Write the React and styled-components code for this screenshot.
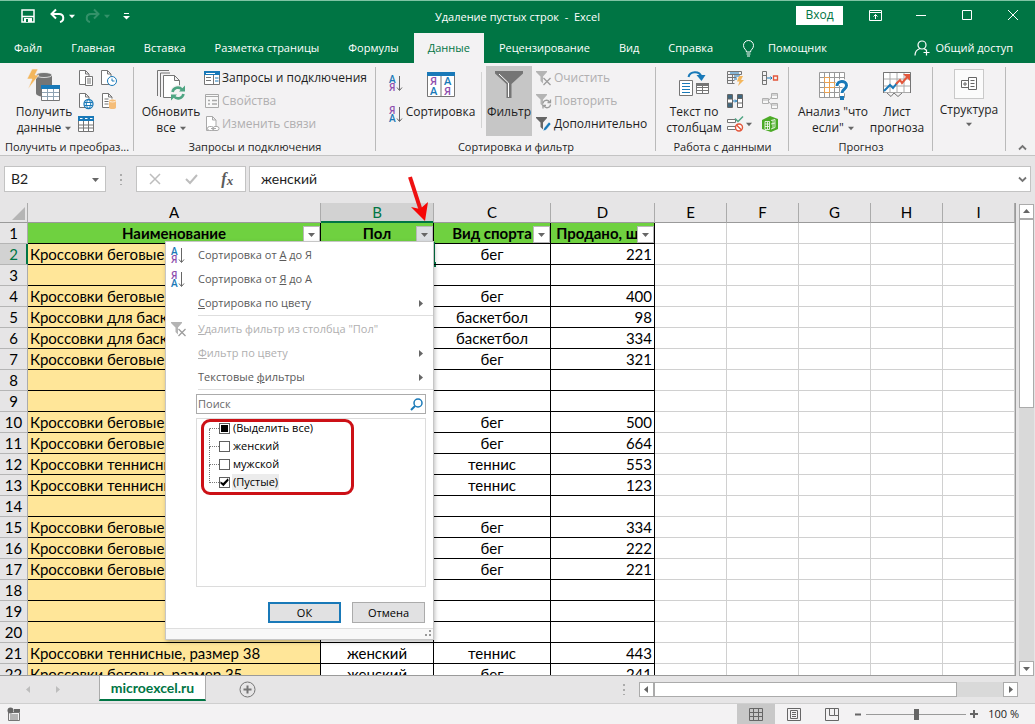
import React from "react";
import styled, {createGlobalStyle, css, ThemeProvider} from "styled-components";

const theme = {
    colors: {
        green: '#007544',
        cellGreen: '#6fd140',
        sand: '#ffe699',
        panel: '#f3f2f3',
        frame: '#e6e5e6',
        line: '#c3c3c3',
        grid: '#d0d0d0',
        text: '#1e1e1e',
        muted: '#b0afb0',
        blue: '#1979b8',
        purple: '#8e4fae',
        icon: '#757575',
    },
    fonts: {
        ui: '"Open Sans", "Noto Sans", sans-serif',
        cell: 'Lato, "Noto Sans", sans-serif',
    },
};

const GlobalStyle = createGlobalStyle`
  *, *::before, *::after {
    box-sizing: border-box;
  }

  body {
    margin: 0;
    overflow: hidden;
  }

  button, input {
    font: inherit;
    color: inherit;
    margin: 0;
  }

  button {
    padding: 0;
    border: 0;
    background: none;
  }

  svg {
    display: block;
    flex: none;
    overflow: visible;
  }
`;

const Window = styled.div`
  display: flex;
  flex-direction: column;
  height: 100vh;
  border-top: 1px solid #7fc4a4;
  background-color: ${({theme}) => theme.colors.frame};
  color: ${({theme}) => theme.colors.text};
  font-family: ${({theme}) => theme.fonts.ui};
  font-size: 12px;
  line-height: 16px;
`;

/* title bar */

const TitleBar = styled.header`
  display: grid;
  grid-template-columns: 1fr auto 1fr;
  align-items: center;
  height: 32px;
  padding-bottom: 4px;
  background-color: ${({theme}) => theme.colors.green};
  color: #fff;
`;

const Title = styled.h1`
  margin: 0;
  padding-top: 3px;
  font-size: 11px;
  font-weight: 400;
  white-space: pre;
`;

const QuickAccess = styled.div`
  display: flex;
  align-items: center;
  gap: 4px;
  padding: 2px 0 0 21px;
`;

const QuickButton = styled.button`
  display: flex;
  align-items: center;
  gap: 4px;
  margin-right: ${({$after}) => $after || 0}px;
  opacity: ${({disabled}) => disabled ? 0.2 : 1};
  color: #fff;
`;

const WindowControls = styled.div`
  display: flex;
  align-items: center;
  justify-content: flex-end;
  gap: 2px;
`;

const SignIn = styled.button`
  width: 47px;
  height: 19px;
  margin-right: 8px;
  background-color: #fff;
  color: ${({theme}) => theme.colors.green};
`;

const ControlButton = styled.button`
  display: grid;
  place-items: center;
  width: 44px;
  height: 28px;
  color: #fff;
`;

/* tabs */

const TabBar = styled.nav`
  display: flex;
  gap: 1px;
  height: 30px;
  background-color: ${({theme}) => theme.colors.green};
  font-size: 11px;
`;

const Tab = styled.button`
  display: flex;
  align-items: center;
  gap: 13px;
  padding: 0 14px;
  color: #fff;

  ${({$active, theme}) => $active && css`
    background-color: ${theme.colors.panel};
    color: ${theme.colors.green};
  `}
`;

const Share = styled(Tab)`
  gap: 5px;
  margin-left: auto;
  padding-right: 22px;
`;

/* ribbon */

const Ribbon = styled.section`
  display: flex;
  height: 93px;
  padding-top: 3px;
  border-bottom: 1px solid ${({theme}) => theme.colors.line};
  background-color: ${({theme}) => theme.colors.panel};
`;

const Group = styled.div`
  position: relative;
  display: flex;
  flex-direction: column;
  flex: none;
  width: ${({$width}) => $width}px;

  &::after {
    content: "";
    position: absolute;
    top: 1px;
    right: 0;
    width: 1px;
    height: 84px;
    background-color: #bababa;
  }
`;

const GroupBody = styled.div`
  display: flex;
  height: 73px;
  padding-left: ${({$left}) => $left}px;
`;

const GroupLabel = styled.div`
  text-align: center;
  font-size: 11px;
  white-space: nowrap;
`;

const BigButton = styled.button`
  display: flex;
  flex-direction: column;
  align-items: center;
  flex: none;
  width: ${({$width}) => $width}px;
  height: 70px;
  white-space: nowrap;
  background-color: ${({$pressed}) => $pressed ? '#c6c6c6' : 'transparent'};

  > svg, > i {
    margin: 3px 0;
  }
`;

const Caption = styled.span`
  display: flex;
  align-items: center;
  gap: 4px;
`;

const Stack = styled.div`
  display: flex;
  flex-direction: column;
  margin-left: ${({$left}) => $left || 0}px;
`;

const SmallButton = styled.button`
  display: flex;
  align-items: center;
  gap: 2px;
  height: 23px;
  white-space: nowrap;
  color: ${({disabled, theme}) => disabled ? theme.colors.muted : 'inherit'};
`;

const IconGrid = styled.div`
  display: grid;
  grid-template-columns: ${({$first}) => $first}px 18px;
  grid-auto-rows: 23px;
  margin-left: ${({$left}) => $left || 0}px;
`;

const SortStack = styled(Stack)`
  gap: 8px;
  padding-top: 6px;
`;

const ThinLine = styled.div`
  width: 1px;
  height: 56px;
  margin: 6px 4px 0;
  background-color: #d3d3d3;
`;

const OutlineBox = styled.i`
  display: grid;
  place-items: center;
  width: 30px;
  height: 30px;
  border: 1px solid #c9c9c9;
  background-color: #fbfbfb;
`;

const Collapse = styled.button`
  align-self: flex-end;
  margin: 0 8px 4px auto;
`;

/* formula bar */

const FormulaBar = styled.div`
  display: flex;
  align-items: center;
  height: 47px;
  padding: 0 4px 1px;
  font-family: ${({theme}) => theme.fonts.cell};
  font-size: 14px;
`;

const NameBox = styled.label`
  display: flex;
  align-items: center;
  width: 102px;
  height: 26px;
  padding: 0 6px;
  border: 1px solid ${({theme}) => theme.colors.line};
  background-color: #fff;
`;

const BarInput = styled.input`
  flex: 1;
  min-width: 0;
  border: 0;
  padding: 0;
  outline: 0;
  background: none;
  font-size: ${({$size}) => $size}px;
`;

const FormulaTools = styled.div`
  display: flex;
  align-items: center;
  justify-content: space-around;
  width: 110px;
  height: 26px;
  margin: 0 3px 0 13px;
  border: 1px solid ${({theme}) => theme.colors.line};
  background-color: #fff;
`;

const FormulaField = styled(NameBox)`
  flex: 1;
  padding: 0 3px 0 11px;
`;

const FxButton = styled.button`
  font: italic 700 16px "Liberation Serif", serif;
  color: #5b5b5b;

  sub {
    font-size: 13px;
    vertical-align: -1px;
  }
`;

/* sheet */

const Workspace = styled.main`
  position: relative;
  display: flex;
  flex: 1;
  min-height: 0;
`;

const SheetView = styled.div`
  flex: 1;
  overflow: hidden;
  border-right: 1px solid #9a9a9a;
  border-bottom: 1px solid #9a9a9a;
  background-color: #fff;
`;

const Sheet = styled.table`
  width: 100%;
  table-layout: fixed;
  border-collapse: separate;
  border-spacing: 0;
  font-family: ${({theme}) => theme.fonts.cell};
  font-size: 15px;
  line-height: 20px;
  color: #000;
`;

const Head = styled.th`
  height: ${({scope}) => scope === 'col' ? 20 : 21}px;
  padding: 0;
  border-right: 1px solid #ababab;
  border-bottom: 1px solid ${({scope}) => scope === 'col' ? '#9a9a9a' : '#b5b5b5'};
  background-color: ${({theme}) => theme.colors.frame};
  font-weight: 400;
  line-height: ${({scope}) => scope === 'col' ? 19 : 20}px;

  ${({$active, scope, theme}) => $active && css`
    background-color: #d2d2d2;
    color: ${theme.colors.green};
    box-shadow: inset ${scope === 'col' ? '0 -1px' : '-1px 0'} ${theme.colors.green};
    border-${scope === 'col' ? 'bottom' : 'right'}-color: ${theme.colors.green};
  `}
`;

const Corner = styled(Head)`
  svg {
    margin: 1px 2px 0 auto;
  }
`;

const Cell = styled.td`
  position: relative;
  height: 21px;
  padding: 0 2px;
  border-right: 1px solid ${({theme}) => theme.colors.grid};
  border-bottom: 1px solid ${({theme}) => theme.colors.grid};
  text-align: ${({$align}) => $align || 'left'};
  white-space: nowrap;

  ${({$framed}) => $framed && css`
    border-color: #000;
  `}

  ${({$fill}) => $fill && css`
    background-color: ${$fill};
  `}
`;

const TitleCell = styled(Cell)`
  padding: 0;
  font-weight: 700;
  text-align: center;
`;

const FilterButton = styled.button`
  position: absolute;
  right: 0;
  bottom: 0;
  display: grid;
  place-items: center;
  width: 17px;
  height: 17px;
  border: 1px solid #b9b9b9;
  background-color: ${({$open}) => $open ? '#dcdfe3' : '#fff'};
`;

const Selection = styled.div`
  position: absolute;
  inset: -2px;
  border: 2px solid ${({theme}) => theme.colors.green};

  &::after {
    content: "";
    position: absolute;
    right: -3px;
    bottom: -3px;
    width: 5px;
    height: 5px;
    background-color: ${({theme}) => theme.colors.green};
  }
`;

const Scroller = styled.div`
  display: flex;
  flex-direction: ${({$vertical}) => $vertical ? 'column' : 'row'};
  background-color: #d9d9d9;
`;

const VScroller = styled(Scroller)`
  width: 15px;
  margin: 1px 1px 0 3px;
`;

const HScroller = styled(Scroller)`
  width: 379px;
  height: 15px;
  margin: 0 17px 0 13px;
`;

const ScrollButton = styled.button`
  display: grid;
  place-items: center;
  width: 15px;
  height: 15px;
  border: 1px solid #ababab;
  background-color: #fff;
`;

const Thumb = styled.div`
  flex: none;
  width: ${({$vertical}) => $vertical ? '100%' : '80%'};
  height: ${({$vertical}) => $vertical ? '40%' : '100%'};
  margin-bottom: auto;
  margin-right: auto;
  border: 1px solid #ababab;
  background-color: #fff;
`;

/* filter menu */

const Menu = styled.div`
  position: absolute;
  z-index: 2;
  top: 18px;
  right: -1px;
  width: 269px;
  padding-top: 1px;
  border: 1px solid #c6c6c6;
  background-color: #fff;
  box-shadow: 1px 2px 4px rgba(0, 0, 0, 0.25);
  color: #5a5a5a;
  font-family: ${({theme}) => theme.fonts.ui};
  font-size: 11px;
  font-weight: 400;
  line-height: 16px;
  text-align: left;
`;

const MenuItem = styled.button`
  display: grid;
  grid-template-columns: 32px 1fr 6px;
  align-items: center;
  width: 100%;
  height: 24px;
  padding: 0 10px 0 0;
  text-align: left;
  color: ${({disabled, theme}) => disabled ? theme.colors.muted : 'inherit'};

  > span {
    grid-column: 2;
  }

  > svg:first-child {
    margin-left: 5px;
  }
`;

const Divider = styled.hr`
  height: 1px;
  margin: 0 0 1px 32px;
  border: 0;
  background-color: #dedede;
`;

const SearchBox = styled.label`
  display: flex;
  align-items: center;
  height: 20px;
  margin: 4px 7px 0 30px;
  padding: 0 2px 0 1px;
  border: 1px solid #ababab;

  input::placeholder {
    color: #6a6a6a;
    opacity: 1;
  }
`;

const ValueList = styled.ul`
  position: relative;
  height: 169px;
  margin: 4px 7px 0 30px;
  padding: 0 0 0 12px;
  border: 1px solid #dcdcdc;
  list-style: none;
  color: #000;
`;

const Value = styled.li`
  display: flex;
  align-items: center;
  height: 18px;

  &::before {
    content: "";
    align-self: flex-start;
    width: 10px;
    height: 18px;
    margin-top: -8px;
    border-left: 1px dotted #777;
    border-bottom: 1px dotted #777;
  }

  &:first-child::before {
    border-left-color: transparent;
  }

  label {
    display: flex;
    align-items: center;
    gap: 2px;
  }

  span {
    padding: 0 1px;
    background-color: ${({$focused}) => $focused ? '#ececec' : 'transparent'};
  }
`;

const Check = styled.input`
  appearance: none;
  display: grid;
  place-items: center;
  width: 11px;
  height: 11px;
  border: 1px solid #5f5f5f;
  background-color: #fff;

  &::after {
    content: "";
    width: ${({$mixed}) => $mixed ? 7 : 9}px;
    height: ${({$mixed}) => $mixed ? 7 : 9}px;
    background-color: #000;
    display: ${({$mixed}) => $mixed ? 'block' : 'none'};
  }

  &:checked::after {
    display: block;
    clip-path: polygon(5% 45%, 35% 62%, 88% 8%, 96% 32%, 38% 96%, 5% 68%);
  }
`;

const RedFrame = styled.div`
  position: absolute;
  top: 0;
  left: 4px;
  width: 153px;
  height: 76px;
  border: 3px solid #cc1016;
  border-radius: 9px;
  pointer-events: none;
`;

const MenuActions = styled.div`
  display: flex;
  justify-content: flex-end;
  gap: 11px;
  padding: 15px 8px 5px;
`;

const DialogButton = styled.button`
  width: 73px;
  height: 21px;
  border: ${({$primary, theme}) => $primary ? `2px solid ${theme.colors.blue}` : '1px solid #ababab'};
  background-color: #e1e1e2;
  color: #000;
`;

const MenuFooter = styled.div`
  display: flex;
  align-items: flex-end;
  justify-content: flex-end;
  height: 11px;
  padding: 2px;
  border-top: 1px solid #dedede;
  background-color: #f8f8f8;
`;

const RedArrow = styled.svg`
  position: absolute;
  z-index: 3;
  top: -28px;
  left: 404px;
`;

/* bottom bars */

const SheetBar = styled.div`
  display: flex;
  align-items: center;
  height: 27px;
`;

const SheetNav = styled.div`
  display: flex;
  gap: 22px;
  width: 99px;
  padding-left: 25px;
`;

const SheetTab = styled.button`
  align-self: flex-start;
  width: 107px;
  height: 25px;
  border: solid #ababab;
  border-width: 0 1px;
  border-bottom: 2px solid ${({theme}) => theme.colors.green};
  background-color: #fff;
  color: ${({theme}) => theme.colors.green};
  font-family: ${({theme}) => theme.fonts.cell};
  font-size: 14px;
  font-weight: 700;
`;

const AddSheet = styled.button`
  margin: 0 auto 0 33px;
`;

const StatusBar = styled.footer`
  display: flex;
  align-items: center;
  height: 21px;
  padding: 0 16px 0 7px;
  border-top: 1px solid #cfcfcf;
  background-color: ${({theme}) => theme.colors.panel};
  font-size: 11px;
`;

const Views = styled.div`
  display: flex;
  align-self: stretch;
  margin-left: auto;
`;

const ViewButton = styled.button`
  display: grid;
  place-items: center;
  width: 38px;
  background-color: ${({$active}) => $active ? '#c8c8c8' : 'transparent'};
`;

const ZoomButton = styled.button`
  width: 15px;
  height: 15px;
  display: grid;
  place-items: center;
`;

const ZoomRange = styled.input`
  appearance: none;
  width: 100px;
  height: 11px;
  background: linear-gradient(#9a9a9a, #9a9a9a) center / 100% 1px no-repeat;

  &::-webkit-slider-thumb {
    appearance: none;
    width: 5px;
    height: 11px;
    background-color: #666;
  }
`;

const ZoomValue = styled.output`
  width: 32px;
  margin-left: 6px;
  text-align: right;
  white-space: nowrap;
`;

/* icons */

const Svg = ({w = 16, h = 16, children, ...rest}) => (
    <svg width={w} height={h} viewBox={`0 0 ${w} ${h}`} fill="none" stroke="#757575" aria-hidden="true" {...rest}>
        {children}
    </svg>
);

const Caret = ({color = '#666', dir = 'down', size = 7}) => {
    const turn = {down: 0, up: 180, left: 90, right: 270}[dir];
    return (
        <svg width={size} height={size} viewBox="0 0 7 7" aria-hidden="true">
            <path d="M0 2h7L3.500 6z" fill={color} transform={`rotate(${turn} 3.5 3.5)`}/>
        </svg>
    );
};

// The A/Я letters of the sort icons
const Letter = styled.text`
  font: 600 ${({$size}) => $size || 10}px ${({theme}) => theme.fonts.ui};
  stroke: none;
  fill: ${({$tone, theme}) => theme.colors[$tone]};
`;

const SortIcon = ({desc}) => (
    <Svg w={15} h={19}>
        <Letter x="0" y="9" $tone={desc ? 'purple' : 'blue'}>{desc ? 'Я' : 'А'}</Letter>
        <Letter x="0" y="17" $tone={desc ? 'blue' : 'purple'}>{desc ? 'А' : 'Я'}</Letter>
        <path d="M10.500 2v14M8 13.500l2.500 3 2.500-3" stroke="#666"/>
    </Svg>
);

const SortBigIcon = () => (
    <Svg w={30} h={32}>
        <path d="M1.500 5.500h27v22h-27zM15 5v22" fill="#fff"/>
        <path d="M1 3h28v4H1z" fill="#1979b8" stroke="none"/>
        <Letter x="4" y="16" $size={11} $tone="purple">Я</Letter>
        <Letter x="4" y="26" $size={11} $tone="blue">А</Letter>
        <Letter x="18" y="16" $size={11} $tone="blue">А</Letter>
        <Letter x="18" y="26" $size={11} $tone="purple">Я</Letter>
    </Svg>
);

const Funnel = ({w = 16, color = '#757575', children}) => (
    <Svg w={w} h={16}>
        <path d="M0 1h11v1L7 6.500v7L4.500 11V6.500L0 2z" fill={color} stroke="none"/>
        {children}
    </Svg>
);

const ClearFilterIcon = () => (
    <Funnel color="#b4b4b4"><path d="M7.500 8l7 7M14.500 8l-7 7" stroke="#9c9c9c" strokeWidth="1.300"/></Funnel>
);

const ReapplyIcon = () => (
    <Funnel color="#b4b4b4">
        <path d="M7 10.500a3.500 3.500 0 0 1 6.500-1.500M14.500 11.500a3.500 3.500 0 0 1-6.500 1.500M14.500 6.500v3h-3M7 15.500v-3h3" stroke="#9c9c9c" strokeWidth="1.300"/>
    </Funnel>
);

const AdvancedIcon = () => (
    <Funnel color="#666"><path d="M7 15l1-3 5-6 2 2-5 6z" fill="#1979b8" stroke="#fff" strokeWidth=".5"/></Funnel>
);

const FilterBigIcon = () => (
    <Svg w={30} h={32}>
        <path d="M1 2h28v2.500L17.500 15v14h-5V15L1 4.500z" fill="#757575" stroke="none"/>
        <path d="M5 5l9.500 9V28" stroke="#fff"/>
    </Svg>
);

const GetDataIcon = () => (
    <Svg w={34} h={32}>
        <path d="M9 6v18c0 5 16 5 16 0V6z" fill="#757575" stroke="none"/>
        <ellipse cx="17" cy="6" rx="8" ry="2.500" fill="#757575" stroke="#f3f2f3" strokeWidth=".8"/>
        <path d="M5 0h6L8 6h4L1 20l4-10H0z" fill="#f3b65c" stroke="#f3f2f3" strokeWidth=".6"/>
        <path d="M14.500 17.500h18v14h-18z" fill="#fff"/>
        <path d="M15 23.500h17M15 27.500h17M20.500 20v11M26.500 20v11" stroke="#8fa3b3"/>
        <path d="M14 16h19v4H14z" fill="#1979b8" stroke="none"/>
    </Svg>
);

const Page = ({x = 0, fill = '#fff', stroke}) => (
    <path d={`M${x + 1.5} .500h6l3.500 3.500v10.500h-9.500zM${x + 7.5} .500v3.500h3.500`} fill={fill} stroke={stroke}/>
);

const PageTextIcon = () => (
    <Svg><Page/><path d="M7.500 6.500h7v9h-7zM9 9h4M9 11h4M9 13h4" fill="#fff"/></Svg>
);

const PageClockIcon = () => (
    <Svg w={18}>
        <Page/>
        <circle cx="12" cy="11" r="4.500" fill="#fff" stroke="#1979b8"/>
        <path d="M12 8.500V11h2.500" stroke="#1979b8"/>
    </Svg>
);

const PageGlobeIcon = () => (
    <Svg>
        <Page/>
        <circle cx="10.500" cy="11" r="4.500" fill="#fff" stroke="#1979b8" strokeWidth="1.300"/>
        <path d="M6.500 9.500h8M6.500 12.500h8M10.500 6.500c-3 3-3 6 0 9c3-3 3-6 0-9" stroke="#1979b8"/>
    </Svg>
);

const PageDbIcon = () => (
    <Svg w={18}>
        <Page x={1}/>
        <path d="M4.500 6h4M4.500 8.500h4M4.500 11h4"/>
        <path d="M9 7.500v7c0 2 7 2 7 0v-7z" fill="#f5bd78" stroke="none"/>
        <ellipse cx="12.500" cy="7.500" rx="3.500" ry="1.500" fill="#f5bd78" stroke="#fff" strokeWidth=".7"/>
    </Svg>
);

const TableIcon = () => (
    <Svg>
        <path d="M.5 2.500h15v13H.5zM0 9h16M0 12h16M5.500 5v11M10.500 5v11" fill="#fff"/>
        <path d="M0 0h16v5H0z" fill="#1979b8" stroke="none"/>
        <path d="M2 2.500h2.500M7 2.500h2.500M12 2.500h2.500" stroke="#fff"/>
    </Svg>
);

const RefreshIcon = () => (
    <Svg w={32} h={32}>
        <path d="M2.500 27V1.500H14M5.500 28V4H15"/>
        <path d="M8.500 6.500h11l5 5v17h-16zM19.500 6.500v5h5" fill="#fff"/>
        <circle cx="23" cy="24" r="8" fill="#f3f2f3" stroke="none"/>
        <path d="M17.500 23a5.500 5.500 0 0 1 9.500-2.500M28.500 25a5.500 5.500 0 0 1-9.500 2.500" stroke="#4fa583" strokeWidth="2.600"/>
        <path d="M30 16.500v6h-6zM16 31.500v-6h6z" fill="#4fa583" stroke="none"/>
    </Svg>
);

const QueriesIcon = () => (
    <Svg>
        <path d="M.5 2.500h15v12H.5z" fill="#fff"/>
        <path d="M0 1h16v4H0z" fill="#1979b8" stroke="none"/>
        <path d="M2 3.500h9" stroke="#fff"/>
        <path d="M9.500 5v9M2 7.500h5M2 10.500h5"/>
        <path d="M11 8h3.500M11 11h3.500" stroke="#1979b8"/>
    </Svg>
);

const PropertiesIcon = () => (
    <Svg stroke="#a9a9a9">
        <path d="M1.500 1.500h13v13h-13zM1 3.500h14" fill="#f8f8f8"/>
        <path d="M4 7.500h2M4 11h2M8 7.500h5M8 11h5" strokeWidth="1.500"/>
    </Svg>
);

const EditLinksIcon = () => (
    <Svg stroke="#a9a9a9">
        <Page x={1} stroke="#a9a9a9"/>
        <rect x="3.500" y="10.500" width="6" height="4" rx="2" fill="#fff"/>
        <rect x="9" y="10.500" width="6" height="4" rx="2" fill="#fff"/>
        <path d="M7 12.500h5"/>
    </Svg>
);

const TextColumnsIcon = () => (
    <Svg w={32} h={32}>
        <path d="M1.500 11.500h13v15h-13z" fill="#fff"/>
        <path d="M4 14.500h8M4 17.500h8M4 20.500h8M4 23.500h8" stroke="#1979b8"/>
        <path d="M18.500 14.500h12v10h-12zM18 18.500h12M18 21.500h12M24.500 15v10" fill="#fff"/>
        <path d="M18 14h13v3H18z" fill="#757575" stroke="none"/>
        <path d="M10.500 8c1.500-6 11-6.500 13 0" stroke="#1979b8" strokeWidth="2"/>
        <path d="M18.500 6h9l-4 6z" fill="#1979b8" stroke="none"/>
    </Svg>
);

const FlashFillIcon = () => (
    <Svg w={17}>
        <path d="M.5 1.500h14v3H.5zM.5 4.500v9h7M5.500 4v9M.5 7.500h9M.5 10.500h7"/>
        <path d="M3 3h9M7 6h6M7 9h3" stroke="#1979b8"/>
        <path d="M12 6h4l-2 4h3l-6 6 1.500-4.500H10z" fill="#f3b65c" stroke="none"/>
    </Svg>
);

const DuplicatesIcon = () => (
    <Svg>
        <path d="M.5 1.500h5v13h-5zM10.500 1.500h5v13h-5z" fill="#fff" stroke="#666"/>
        <path d="M1 2h4v4H1zM1 10h4v4H1zM11 2h4v3h-4z" fill="#41687f" stroke="none"/>
        <path d="M0 6h5M0 10h5M11 5.500h5M11 10h5" stroke="#666"/>
        <path d="M6 8h4M8 6.500L9.500 8 8 9.500" stroke="#1979b8"/>
    </Svg>
);

const ValidationIcon = () => (
    <Svg w={17}>
        <path d="M.5 3.500h8v3h-8zM.5 10.500h8v3h-8z" fill="#fff"/>
        <path d="M8 2.500l3 3L16 .5" stroke="#4fa583" strokeWidth="1.500"/>
        <circle cx="12" cy="11.500" r="3.500" fill="#fff" stroke="#e2573c" strokeWidth="1.400"/>
        <path d="M9.500 9l5 5" stroke="#e2573c" strokeWidth="1.400"/>
    </Svg>
);

const ConsolidateIcon = () => (
    <Svg>
        <path d="M.5 1.500h4v13h-4zM.5 5.500h4M.5 10.500h4"/>
        <path d="M5 8h5M8.500 6.500L10 8 8.500 9.500" stroke="#1979b8"/>
        <path d="M11.500 6h4v4h-4z" stroke="#e2573c" strokeWidth="1.300"/>
    </Svg>
);

const RelationsIcon = () => (
    <Svg stroke="#b0b0b0">
        <path d="M.5 5.500h6v5h-6zM9.500 .500h6v5h-6zM9.500 10.500h6v5h-6zM.5 7h6M9.500 2h6M9.500 12h6M7 7l2.500-3M7 9l2.500 3" fill="#f8f8f8"/>
    </Svg>
);

const DataModelIcon = () => (
    <Svg>
        <path d="M0 4l8-4 8 3v10l-7 3-9-3z" fill="#4cab27" stroke="none"/>
        <path d="M3 5.500h4.500v8H3zM3 8h4M3 10.500h4M5.500 6v7M9 4.500l4-1v8l-4 1.500M9 8l4-1M11 4v8" stroke="#fff" strokeWidth=".8"/>
    </Svg>
);

const WhatIfIcon = () => (
    <Svg w={32} h={32}>
        <path d="M2.500 3.500h25v25h-25zM2 8.500h25M2 13.500h25M2 18.500h25M2 23.500h25M7.500 3v25M12.500 3v25M17.500 3v25M22.500 3v25" fill="#fff" stroke="#999"/>
        <path d="M7.500 8.500h5v5h-5zM7.500 18.500h5v5h-5zM12.500 13.500h5v5h-5z" stroke="#eda14e"/>
        <path d="M20 17c0-6 9.500-6 9.500-.5 0 4-4.500 3.500-4.500 8" stroke="#fff" strokeWidth="5"/>
        <path d="M20 17c0-6 9.500-6 9.500-.5 0 4-4.500 3.500-4.500 7.500" stroke="#1979b8" strokeWidth="3"/>
        <path d="M23 27h4v4h-4z" fill="#1979b8" stroke="none"/>
    </Svg>
);

const ForecastIcon = () => (
    <Svg w={30} h={32}>
        <path d="M1.500 3.500h27v20h-27zM1 10h28M1 17h28M8 4v19M15 4v19M22 4v19" fill="#fff" stroke="#aaa"/>
        <path d="M1.500 24V3.500h27V24M5 24l4 3.500 3-3.500M12 24l4 3.500 4-3.500"/>
        <path d="M2 22l6-6 3 3 4-5" stroke="#1979b8" strokeWidth="2"/>
        <path d="M14 15l4-4 2 3 6-7" stroke="#e2573c" strokeWidth="2"/>
        <path d="M21 5h7v7z" fill="#e2573c" stroke="none"/>
    </Svg>
);

const OutlineIcon = () => (
    <Svg stroke="#666">
        <path d="M.5 4.500h7v7h-7zM2 8h4M4 6v4M7.500 1.500h8v12h-8zM9.500 4.500h4M9.500 7.500h4M9.500 10.500h4" fill="#fff"/>
    </Svg>
);

const SaveIcon = () => (
    <Svg w={14} h={14} stroke="#fff" strokeWidth="1.500">
        <path d="M1 1h12v12H1zM1 7.500h12"/>
        <path d="M3 9h8v4H3z" fill="#fff" stroke="none"/>
        <path d="M5 10h2v3H5z" fill="#007544" stroke="none"/>
    </Svg>
);

const UndoIcon = ({flip}) => (
    <Svg w={15} h={14} stroke="#fff" strokeWidth="2">
        <g transform={flip ? 'matrix(-1 0 0 1 15 0)' : undefined}>
            <path d="M2 5h7c5.500 0 5.500 7 1 8"/>
            <path d="M6 .5L1.500 5 6 9.500"/>
        </g>
    </Svg>
);

const MoreIcon = () => (
    <Svg w={7} h={8} stroke="#fff"><path d="M1 1.500h5"/><path d="M0 4h7L3.500 7.500z" fill="#fff" stroke="none"/></Svg>
);

const BulbIcon = () => (
    <Svg w={13} h={17} stroke="#fff">
        <path d="M4.500 12c0-2.500-3-3-3-6.500a5 5 0 0 1 10 0c0 3.500-3 4-3 6.500zM4.500 14h4M5 16h3"/>
    </Svg>
);

const PersonIcon = () => (
    <Svg w={16} h={16} stroke="#fff" strokeWidth="1.200">
        <circle cx="8" cy="5" r="4"/>
        <path d="M1 15.500c0-4 2-6 5-7M10 8.500l2 1.500M12.500 9.500v6M9.500 12.500h6"/>
    </Svg>
);

const SearchIcon = () => (
    <Svg w={13} h={13} stroke="#1979b8" strokeWidth="1.500">
        <circle cx="8" cy="5" r="4"/><path d="M5 8l-4 4" strokeWidth="2"/>
    </Svg>
);

const DotsIcon = () => (
    <Svg w={3} h={13}><path d="M1 1v11" strokeWidth="2" strokeDasharray="2 3" stroke="#ababab"/></Svg>
);

const TABS = ['Файл', 'Главная', 'Вставка', 'Разметка страницы', 'Формулы', 'Данные', 'Рецензирование', 'Вид', 'Справка'];

const RUN = 'Кроссовки беговые,';
const BASKET = 'Кроссовки для баскетбола';
const TENNIS = 'Кроссовки теннисные,';

// [name, gender, sport, sold]; null stands for a blank row
const ROWS = [
    [RUN, '', 'бег', 221],
    null,
    [RUN, '', 'бег', 400],
    [BASKET, '', 'баскетбол', 98],
    [BASKET, '', 'баскетбол', 334],
    [RUN, '', 'бег', 321],
    null,
    null,
    [RUN, '', 'бег', 500],
    [RUN, '', 'бег', 664],
    [TENNIS, '', 'теннис', 553],
    [TENNIS, '', 'теннис', 123],
    null,
    [RUN, '', 'бег', 334],
    [RUN, '', 'бег', 222],
    [RUN, '', 'бег', 221],
    null,
    null,
    null,
    [TENNIS + ' размер 38', 'женский', 'теннис', 443],
    [RUN + ' размер 35', 'женский', 'бег', 241],
];

const COLUMNS = ['A', 'B', 'C', 'D', 'E', 'F', 'G', 'H', 'I'];
const WIDTHS = [28, 293, 113, 117, 104, 72, 72, 72, 72];
const FREE = ['E', 'F', 'G', 'H', 'I'];

const FilterMenu = () => (
    <Menu role="menu">
        <MenuItem><SortIcon/><span>Сортировка от <u>А</u> до Я</span></MenuItem>
        <MenuItem><SortIcon desc/><span>Сортировка от <u>Я</u> до А</span></MenuItem>
        <MenuItem><span><u>С</u>ортировка по цвету</span><Caret dir="right"/></MenuItem>
        <Divider/>
        <MenuItem disabled><ClearFilterIcon/><span><u>У</u>далить фильтр из столбца "Пол"</span></MenuItem>
        <MenuItem disabled><span><u>Ф</u>ильтр по цвету</span><Caret dir="right"/></MenuItem>
        <MenuItem><span>Текстовые <u>ф</u>ильтры</span><Caret dir="right"/></MenuItem>
        <Divider/>
        <SearchBox>
            <BarInput $size={11} placeholder="Поиск" aria-label="Поиск"/>
            <SearchIcon/>
        </SearchBox>
        <ValueList>
            <Value><label><Check type="checkbox" $mixed/><span>(Выделить все)</span></label></Value>
            <Value><label><Check type="checkbox"/><span>женский</span></label></Value>
            <Value><label><Check type="checkbox"/><span>мужской</span></label></Value>
            <Value $focused><label><Check type="checkbox" defaultChecked/><span>(Пустые)</span></label></Value>
            <RedFrame/>
        </ValueList>
        <MenuActions>
            <DialogButton $primary>ОК</DialogButton>
            <DialogButton>Отмена</DialogButton>
        </MenuActions>
        <MenuFooter>
            <Svg w={7} h={7} stroke="none" fill="#999"><path d="M5 0h2v2H5zM5 4h2v2H5zM1 4h2v2H1z"/></Svg>
        </MenuFooter>
    </Menu>
);

const FilterHead = ({open, children}) => (
    <TitleCell $framed $fill={theme.colors.cellGreen}>
        {children}
        <FilterButton $open={open} aria-label="Фильтр"><Caret/></FilterButton>
        {open && <FilterMenu/>}
    </TitleCell>
);

const SheetRow = ({number, data}) => {
    const [name, gender, sport, sold] = data || [];
    return (
        <tr>
            <Head scope="row" $active={number === 2}>{number}</Head>
            <Cell $framed $fill={theme.colors.sand}>{name}</Cell>
            <Cell $framed $align="center">{gender}{number === 2 && <Selection/>}</Cell>
            <Cell $framed $align="center">{sport}</Cell>
            <Cell $framed $align="right">{sold}</Cell>
            {FREE.map((col) => <Cell key={col}/>)}
        </tr>
    );
};

const Titles = () => (
    <TitleBar>
        <QuickAccess>
            <QuickButton $after={11} aria-label="Сохранить"><SaveIcon/></QuickButton>
            <QuickButton $after={6} aria-label="Отменить"><UndoIcon/><Caret color="#fff" size={6}/></QuickButton>
            <QuickButton $after={9} disabled aria-label="Вернуть"><UndoIcon flip/><Caret color="#fff" size={6}/></QuickButton>
            <QuickButton aria-label="Настройка"><MoreIcon/></QuickButton>
        </QuickAccess>
        <Title>Удаление пустых строк  -  Excel</Title>
        <WindowControls>
            <SignIn>Вход</SignIn>
            <ControlButton aria-label="Лента">
                <Svg w={13} h={11} stroke="#fff"><path d="M.5.500h12v10H.5zM1 2.500h12M6.500 9V4.500M4.500 6.500l2-2 2 2"/></Svg>
            </ControlButton>
            <ControlButton aria-label="Свернуть"><Svg w={10} h={10} stroke="#fff"><path d="M0 5.500h10"/></Svg></ControlButton>
            <ControlButton aria-label="Развернуть"><Svg w={10} h={10} stroke="#fff"><path d="M.5.500h9v9h-9z"/></Svg></ControlButton>
            <ControlButton aria-label="Закрыть"><Svg w={10} h={10} stroke="#fff"><path d="M0 0l10 10M10 0L0 10"/></Svg></ControlButton>
        </WindowControls>
    </TitleBar>
);

const DataRibbon = () => (
    <Ribbon>
        <Group $width={134}>
            <GroupBody $left={13}>
                <BigButton $width={62}>
                    <GetDataIcon/>
                    <Caption>Получить</Caption>
                    <Caption>данные <Caret size={6}/></Caption>
                </BigButton>
                <IconGrid $first={22} $left={3}>
                    <SmallButton aria-label="Из текста"><PageTextIcon/></SmallButton>
                    <SmallButton aria-label="Последние источники"><PageClockIcon/></SmallButton>
                    <SmallButton aria-label="Из интернета"><PageGlobeIcon/></SmallButton>
                    <SmallButton aria-label="Подключения"><PageDbIcon/></SmallButton>
                    <SmallButton aria-label="Из таблицы"><TableIcon/></SmallButton>
                </IconGrid>
            </GroupBody>
            <GroupLabel>Получить и преобраз...</GroupLabel>
        </Group>
        <Group $width={242}>
            <GroupBody $left={6}>
                <BigButton $width={62}>
                    <RefreshIcon/>
                    <Caption>Обновить</Caption>
                    <Caption>все <Caret size={6}/></Caption>
                </BigButton>
                <Stack $left={2}>
                    <SmallButton><QueriesIcon/>Запросы и подключения</SmallButton>
                    <SmallButton disabled><PropertiesIcon/>Свойства</SmallButton>
                    <SmallButton disabled><EditLinksIcon/>Изменить связи</SmallButton>
                </Stack>
            </GroupBody>
            <GroupLabel>Запросы и подключения</GroupLabel>
        </Group>
        <Group $width={280}>
            <GroupBody $left={13}>
                <SortStack>
                    <SmallButton aria-label="По возрастанию"><SortIcon/></SmallButton>
                    <SmallButton aria-label="По убыванию"><SortIcon desc/></SmallButton>
                </SortStack>
                <BigButton $width={73}><SortBigIcon/><Caption>Сортировка</Caption></BigButton>
                <ThinLine/>
                <BigButton $width={46} $pressed><FilterBigIcon/><Caption>Фильтр</Caption></BigButton>
                <Stack $left={4}>
                    <SmallButton disabled><ClearFilterIcon/>Очистить</SmallButton>
                    <SmallButton disabled><ReapplyIcon/>Повторить</SmallButton>
                    <SmallButton><AdvancedIcon/>Дополнительно</SmallButton>
                </Stack>
            </GroupBody>
            <GroupLabel>Сортировка и фильтр</GroupLabel>
        </Group>
        <Group $width={133}>
            <GroupBody $left={7}>
                <BigButton $width={62}>
                    <TextColumnsIcon/>
                    <Caption>Текст по</Caption>
                    <Caption>столбцам</Caption>
                </BigButton>
                <IconGrid $first={35} $left={2}>
                    <SmallButton aria-label="Мгновенное заполнение"><FlashFillIcon/></SmallButton>
                    <SmallButton aria-label="Консолидация"><ConsolidateIcon/></SmallButton>
                    <SmallButton aria-label="Удалить дубликаты"><DuplicatesIcon/></SmallButton>
                    <SmallButton aria-label="Отношения"><RelationsIcon/></SmallButton>
                    <SmallButton aria-label="Проверка данных"><ValidationIcon/><Caret size={6}/></SmallButton>
                    <SmallButton aria-label="Модель данных"><DataModelIcon/></SmallButton>
                </IconGrid>
            </GroupBody>
            <GroupLabel>Работа с данными</GroupLabel>
        </Group>
        <Group $width={144}>
            <GroupBody $left={8}>
                <BigButton $width={72}>
                    <WhatIfIcon/>
                    <Caption>Анализ "что</Caption>
                    <Caption>если" <Caret size={6}/></Caption>
                </BigButton>
                <BigButton $width={56}>
                    <ForecastIcon/>
                    <Caption>Лист</Caption>
                    <Caption>прогноза</Caption>
                </BigButton>
            </GroupBody>
            <GroupLabel>Прогноз</GroupLabel>
        </Group>
        <Group $width={73}>
            <GroupBody $left={4}>
                <BigButton $width={64}>
                    <OutlineBox><OutlineIcon/></OutlineBox>
                    <Caption>Структура</Caption>
                    <Caret size={6}/>
                </BigButton>
            </GroupBody>
        </Group>
        <Collapse aria-label="Свернуть ленту">
            <Svg w={9} h={7}><path d="M1 5.500l3.500-3.500L8 5.500" strokeWidth="1.800"/></Svg>
        </Collapse>
    </Ribbon>
);

const App = () => {
    return (
        <ThemeProvider theme={theme}>
            <GlobalStyle/>
            <Window>
                <Titles/>
                <TabBar>
                    {TABS.map((tab) => <Tab key={tab} $active={tab === 'Данные'}>{tab}</Tab>)}
                    <Tab><BulbIcon/>Помощник</Tab>
                    <Share><PersonIcon/>Общий доступ</Share>
                </TabBar>
                <DataRibbon/>
                <FormulaBar>
                    <NameBox>
                        <BarInput $size={14} defaultValue="B2" aria-label="Имя"/>
                        <Caret/>
                    </NameBox>
                    <Svg w={17} h={13}><path d="M15 1v11" strokeWidth="2" strokeDasharray="2 3" stroke="#ababab"/></Svg>
                    <FormulaTools>
                        <button aria-label="Отмена"><Svg w={12} h={12} stroke="#bdbdbd" strokeWidth="1.500"><path d="M1 1l10 10M11 1L1 11"/></Svg></button>
                        <button aria-label="Ввод"><Svg w={13} h={12} stroke="#bdbdbd" strokeWidth="2"><path d="M1 6l4 4 7-8"/></Svg></button>
                        <FxButton aria-label="Вставить функцию">f<sub>x</sub></FxButton>
                    </FormulaTools>
                    <FormulaField>
                        <BarInput $size={14} defaultValue="женский" aria-label="Строка формул"/>
                        <Svg w={9} h={7}><path d="M1 1.500l3.500 3.500L8 1.500" strokeWidth="1.800"/></Svg>
                    </FormulaField>
                </FormulaBar>
                <Workspace>
                    <SheetView>
                        <Sheet>
                            <colgroup>
                                {WIDTHS.map((width, i) => <col key={i} width={width}/>)}
                                <col/>
                            </colgroup>
                            <thead>
                                <tr>
                                    <Corner scope="col"><Svg w={13} h={13}><path d="M13 0v13H0z" fill="#b5b5b5" stroke="none"/></Svg></Corner>
                                    {COLUMNS.map((col) => <Head key={col} scope="col" $active={col === 'B'}>{col}</Head>)}
                                </tr>
                            </thead>
                            <tbody>
                                <tr>
                                    <Head scope="row">1</Head>
                                    <FilterHead>Наименование</FilterHead>
                                    <FilterHead open>Пол</FilterHead>
                                    <FilterHead>Вид спорта</FilterHead>
                                    <FilterHead>Продано, шт.</FilterHead>
                                    {FREE.map((col) => <Cell key={col}/>)}
                                </tr>
                                {ROWS.map((data, i) => <SheetRow key={i} number={i + 2} data={data}/>)}
                            </tbody>
                        </Sheet>
                    </SheetView>
                    <VScroller $vertical>
                        <ScrollButton aria-label="Вверх"><Caret dir="up"/></ScrollButton>
                        <Thumb $vertical/>
                        <ScrollButton aria-label="Вниз"><Caret/></ScrollButton>
                    </VScroller>
                    <RedArrow width="28" height="48" viewBox="0 0 28 48">
                        <path d="M6 2l11 34" stroke="#ee1111" strokeWidth="4"/>
                        <path d="M7 32l9 2 8-7-3 19z" fill="#f60606"/>
                    </RedArrow>
                </Workspace>
                <SheetBar>
                    <SheetNav>
                        <Caret dir="left" color="#bdbdbd"/>
                        <Caret dir="right" color="#bdbdbd"/>
                    </SheetNav>
                    <SheetTab>microexcel.ru</SheetTab>
                    <AddSheet aria-label="Новый лист">
                        <Svg w={17} h={17}><circle cx="8.500" cy="8.500" r="7.500"/><path d="M8.500 4.500v8M4.500 8.500h8" strokeWidth="2"/></Svg>
                    </AddSheet>
                    <DotsIcon/>
                    <HScroller>
                        <ScrollButton aria-label="Влево"><Caret dir="left"/></ScrollButton>
                        <Thumb/>
                        <ScrollButton aria-label="Вправо"><Caret dir="right"/></ScrollButton>
                    </HScroller>
                </SheetBar>
                <StatusBar>
                    <Svg w={14} h={14}>
                        <path d="M1.500 5.500h11v8h-11zM3 8h8M3 10h8M3 12h8"/>
                        <circle cx="3.500" cy="3.500" r="3" fill="#666" stroke="none"/>
                        <path d="M7 2h6v3H7z" fill="#666" stroke="none"/>
                    </Svg>
                    <Views>
                        <ViewButton $active aria-label="Обычный"><Svg w={14} h={13} stroke="#666"><path d="M.5.500h13v12H.5zM.5 4.500h13M.5 8.500h13M4.500.500v12M9.500.500v12"/></Svg></ViewButton>
                        <ViewButton aria-label="Разметка"><Svg w={14} h={13} stroke="#666"><path d="M.5.500h13v12H.5zM3.500 2.500h7v8h-7zM5 4.500h4M5 6.500h4M5 8.500h4"/></Svg></ViewButton>
                        <ViewButton aria-label="Страничный"><Svg w={14} h={13} stroke="#666"><path d="M.5.500h13v12H.5zM4.500.500v7h5v-7M9.500 7.500h4"/></Svg></ViewButton>
                    </Views>
                    <ZoomButton aria-label="Уменьшить"><Svg w={7} h={7} stroke="#666" strokeWidth="2"><path d="M0 3.500h6"/></Svg></ZoomButton>
                    <ZoomRange type="range" min="0" max="100" defaultValue="50" aria-label="Масштаб"/>
                    <ZoomButton aria-label="Увеличить"><Svg w={8} h={8} stroke="#666" strokeWidth="2"><path d="M0 4h8M4 0v8"/></Svg></ZoomButton>
                    <ZoomValue>100 %</ZoomValue>
                </StatusBar>
            </Window>
        </ThemeProvider>
    );
};

export default App;
